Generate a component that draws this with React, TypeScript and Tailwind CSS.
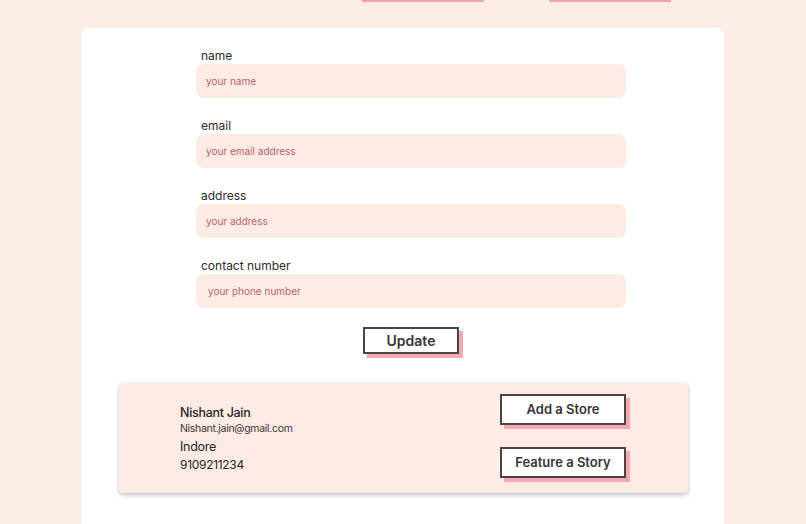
import React from "react";

const fields = [
  { label: "name", placeholder: "your name" },
  { label: "email", placeholder: "your email address" },
  { label: "address", placeholder: "your address" },
  { label: "contact number", placeholder: "your phone number" },
];

function ShadowButton({ children, className }: { children: React.ReactNode; className: string }) {
  return (
    <button
      className={`bg-white border-2 border-[#4a4444] text-[#3a3434] font-semibold shadow-[4px_4px_0_#f5aab3] ${className}`}
    >
      {children}
    </button>
  );
}

export default function App() {
  return (
    <div className="min-h-screen bg-[#fdede7] font-['Inter',sans-serif] text-[#2b2525] overflow-hidden">
      {/* top nav buttons, scrolled away */}
      <div className="flex h-[28px] items-start">
        <div className="ml-[362px] h-[2px] w-[122px] bg-[#f2a2ad]" />
        <div className="ml-[65px] h-[2px] w-[122px] bg-[#f2a2ad]" />
      </div>

      <div className="mx-[81px] w-[643px] bg-white rounded-[8px] pt-[20px] pb-[40px] min-h-[500px]">
        <form className="w-[430px] ml-[115px] flex flex-col gap-[20px]">
          {fields.map((f, i) => (
            <div key={f.label} className="flex flex-col">
              <label className="pl-[5px] text-[12px] leading-[16px] text-[#2e2828]">{f.label}</label>
              <input
                placeholder={f.placeholder}
                className={`h-[34px] rounded-[8px] bg-[#fdebe6] text-[10px] outline-none placeholder:text-[#b8646a] ${i === 3 ? "px-[12px]" : "px-[10px]"}`}
              />
            </div>
          ))}
          <div className="flex justify-center -mt-[1px]">
            <ShadowButton className="w-[96px] h-[27px] text-[14px]">Update</ShadowButton>
          </div>
        </form>

        <div className="mt-[29px] ml-[38px] w-[569px] h-[110px] bg-[#fdebe6] rounded-[4px] shadow-[0_2px_4px_rgba(0,0,0,0.25)] flex items-center justify-between pl-[61px] pr-[62px]">
          <div className="flex flex-col pt-[2px] tracking-[-0.3px]">
            <span className="text-[12.5px] font-medium leading-[17px]">Nishant Jain</span>
            <span className="text-[10.5px] leading-[16px] text-[#3b3535]">Nishant.jain@gmail.com</span>
            <span className="text-[12.5px] leading-[18px] mt-[1px]">Indore</span>
            <span className="text-[12px] leading-[18px]">9109211234</span>
          </div>
          <div className="flex flex-col gap-[22px] mb-[4px]">
            <ShadowButton className="w-[126px] h-[31px] text-[13px]">Add a Store</ShadowButton>
            <ShadowButton className="w-[126px] h-[31px] text-[13px]">Feature a Story</ShadowButton>
          </div>
        </div>
      </div>
    </div>
  );
}
